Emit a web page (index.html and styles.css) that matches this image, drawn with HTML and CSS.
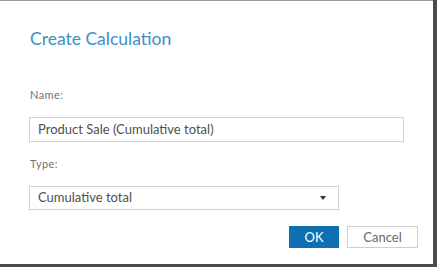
FILE: index.html
```html
<!DOCTYPE html>
<html lang="en">

<head>
  <meta charset="UTF-8">
  <title>Create Calculation</title>
  <link rel="stylesheet" href="styles.css">
</head>

<body>

  <div class="dialog">
    <h1 class="title">Create Calculation</h1>

    <label class="label">Name:</label>
    <div class="field">Product Sale (Cumulative total)</div>

    <label class="label type-label">Type:</label>
    <div class="select">
      <span>Cumulative total</span>
      <span class="arrow"></span>
    </div>

    <div class="actions">
      <button class="btn primary">OK</button>
      <button class="btn">Cancel</button>
    </div>
  </div>

</body>

</html>
```

FILE: styles.css
```css
body {
  margin: 0;
  background-color: #4b4b4b;
  font-family: Lato, 'Open Sans', sans-serif;
}

.dialog {
  width: 433px;
  height: 264px;
  box-sizing: border-box;
  background: #fff;
  border-top: 1px solid #9a9a9a;
  padding-left: 29px;
}

.title {
  margin: 28px 0 0 1px;
  font-size: 17.5px;
  line-height: 20px;
  font-weight: normal;
  color: #3d8fc9;
}

.label {
  display: block;
  margin: 39px 0 0 1px;
  font-size: 11px;
  line-height: 14px;
  letter-spacing: 0.4px;
  color: #717171;
}

.type-label {
  margin-top: 15px;
}

.field {
  width: 375px;
  height: 25px;
  box-sizing: border-box;
  margin-top: 15px;
  padding-left: 8px;
  border: 1px solid #d2d2d2;
  font-size: 13px;
  line-height: 23px;
  color: #4f4f4f;
}

.select {
  display: flex;
  justify-content: space-between;
  align-items: center;
  width: 310px;
  height: 24px;
  box-sizing: border-box;
  margin-top: 15px;
  padding: 0 12px 2px 8px;
  border: 1px solid #d2d2d2;
  font-size: 13px;
  line-height: 18px;
  color: #4f4f4f;
}

.arrow {
  width: 0;
  height: 0;
  margin-top: 2px;
  border-left: 3px solid transparent;
  border-right: 3px solid transparent;
  border-top: 4px solid #333;
}

.actions {
  display: flex;
  justify-content: flex-end;
  gap: 8px;
  margin: 16px 15px 0 0;
}

.btn {
  height: 22px;
  padding: 0;
  box-sizing: border-box;
  font-family: Lato, 'Open Sans', sans-serif;
  font-size: 13px;
  background: #fff;
  border: 1px solid #cfcfcf;
  color: #6a6a6a;
  width: 71px;
}

.btn.primary {
  width: 50px;
  background-color: #0f6fb3;
  border-color: #0f6fb3;
  color: #fff;
}
```
